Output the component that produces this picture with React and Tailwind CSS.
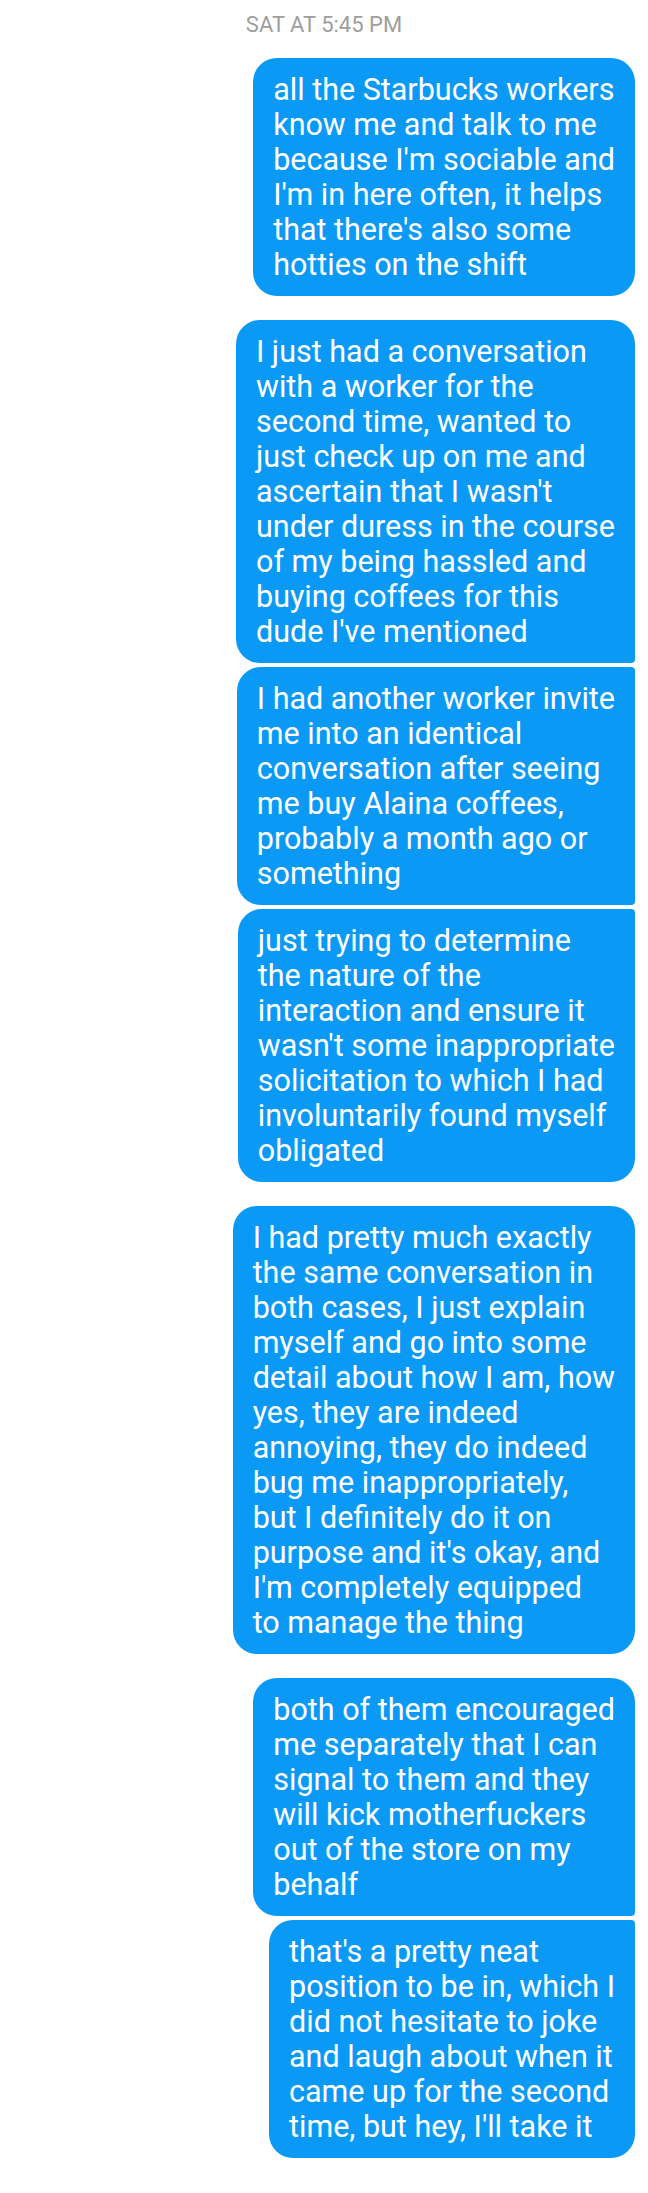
import React from "react";

const groups = [
  [
    [
      "all the Starbucks workers",
      "know me and talk to me",
      "because I'm sociable and",
      "I'm in here often, it helps",
      "that there's also some",
      "hotties on the shift",
    ],
  ],
  [
    [
      "I just had a conversation",
      "with a worker for the",
      "second time, wanted to",
      "just check up on me and",
      "ascertain that I wasn't",
      "under duress in the course",
      "of my being hassled and",
      "buying coffees for this",
      "dude I've mentioned",
    ],
    [
      "I had another worker invite",
      "me into an identical",
      "conversation after seeing",
      "me buy Alaina coffees,",
      "probably a month ago or",
      "something",
    ],
    [
      "just trying to determine",
      "the nature of the",
      "interaction and ensure it",
      "wasn't some inappropriate",
      "solicitation to which I had",
      "involuntarily found myself",
      "obligated",
    ],
  ],
  [
    [
      "I had pretty much exactly",
      "the same conversation in",
      "both cases, I just explain",
      "myself and go into some",
      "detail about how I am, how",
      "yes, they are indeed",
      "annoying, they do indeed",
      "bug me inappropriately,",
      "but I definitely do it on",
      "purpose and it's okay, and",
      "I'm completely equipped",
      "to manage the thing",
    ],
  ],
  [
    [
      "both of them encouraged",
      "me separately that I can",
      "signal to them and they",
      "will kick motherfuckers",
      "out of the store on my",
      "behalf",
    ],
    [
      "that's a pretty neat",
      "position to be in, which I",
      "did not hesitate to joke",
      "and laugh about when it",
      "came up for the second",
      "time, but hey, I'll take it",
    ],
  ],
];

const Bubble = ({ lines, first, last }) => {
  // grouped bubbles get the tight corner on the right side
  const corners = [
    "rounded-l-[24px]",
    first ? "rounded-tr-[24px]" : "rounded-tr-[4px]",
    last ? "rounded-br-[24px]" : "rounded-br-[4px]",
  ].join(" ");

  return (
    <div
      className={`bg-[#0b99f6] text-white px-5 py-[14px] text-[30.5px] leading-[35px] whitespace-nowrap ${corners}`}
    >
      {lines.map((l, i) => (
        <div key={i}>{l}</div>
      ))}
    </div>
  );
};

export default function App() {
  return (
    <div
      className="bg-white min-h-[2193px] w-[648px] pr-[13px] pb-[39px]"
      style={{ fontFamily: "Roboto, 'Noto Sans', sans-serif" }}
    >
      <div className="text-center text-[22px] leading-[26px] text-[#9e9e9e] pt-[12px] pl-[13px]">
        SAT AT 5:45 PM
      </div>

      <div className="flex flex-col items-end gap-[24px] mt-[20px]">
        {groups.map((g, gi) => (
          <div key={gi} className="flex flex-col items-end gap-[4px]">
            {g.map((lines, i) => (
              <Bubble
                key={i}
                lines={lines}
                first={i === 0}
                last={i === g.length - 1}
              />
            ))}
          </div>
        ))}
      </div>
    </div>
  );
}
